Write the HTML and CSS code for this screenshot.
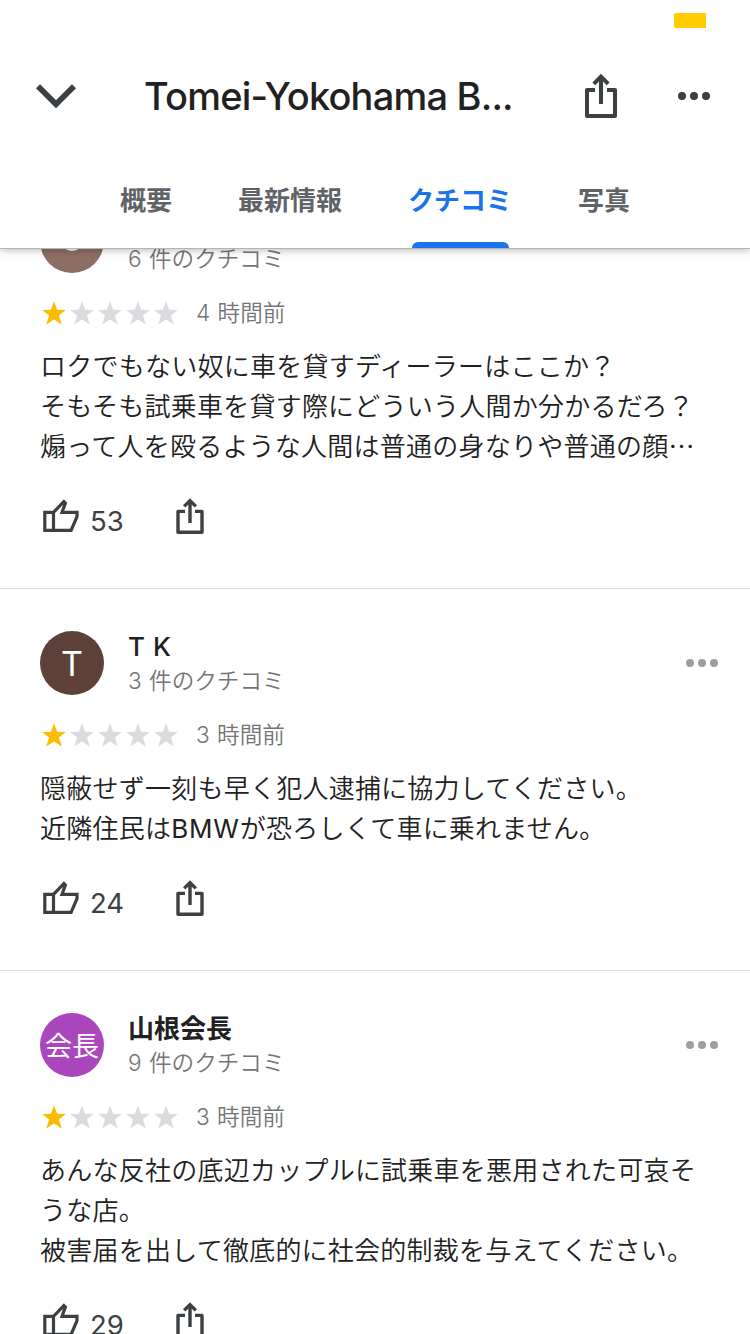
FILE: index.html
```html
<!DOCTYPE html>
<html lang="ja">
<head>
<meta charset="utf-8">
<title>Tomei-Yokohama B…</title>
<link rel="stylesheet" href="styles.css">
</head>
<body>
<svg class="defs" aria-hidden="true">
  <symbol id="star" viewBox="0 0 24 24"><path d="M12 0.3l3.1 8.4 8.7.3-6.9 5.5 2.9 9L12 18.4l-7.8 5.1 2.9-9L.2 9l8.7-.3z"/></symbol>
  <symbol id="dots" viewBox="0 0 32 8"><circle cx="4" cy="4" r="4"/><circle cx="16" cy="4" r="4"/><circle cx="28" cy="4" r="4"/></symbol>
  <symbol id="thumb" viewBox="0 0 36 34"><path fill="none" stroke-width="3.2" d="M10.5 31.4H1.8V13.3h8.7M10.5 31.4V13.3L20.9 2.6l1.5 1.5-3.4 9.2h15v4.3l-5.9 13.8H10.5z"/></symbol>
  <symbol id="share" viewBox="0 0 28 36"><path fill="none" stroke-width="3.4" stroke-linejoin="round" d="M9 13.4H2v20.8h24V13.4h-7"/><path fill="none" stroke-width="3.4" d="M14 25V3M8.2 8.4L14 2.6l5.8 5.8"/></symbol>
</svg>
<div class="screen">
  <header class="header">
    <div class="status"><span class="battery"></span></div>
    <div class="bar">
      <svg class="chevron" viewBox="0 0 40 24"><path d="M2 2.2L20 20.2l18-18"/></svg>
      <h1 class="title">Tomei-Yokohama B...</h1>
      <svg class="share-big" viewBox="0 0 32 44"><path stroke-linejoin="round" d="M10 16H2v26h28V16h-8"/><path d="M16 30V3M8.8 9.8L16 2.6l7.2 7.2"/></svg>
      <svg class="more-big"><use href="#dots"/></svg>
    </div>
    <nav class="tabs">
      <span class="tab">概要</span>
      <span class="tab">最新情報</span>
      <span class="tab active">クチコミ</span>
      <span class="tab">写真</span>
    </nav>
  </header>
  <main class="reviews">
    <article class="review">
      <div class="head">
        <div class="avatar tan">S</div>
        <div class="who"><div class="name">&nbsp;</div><div class="count">6 件のクチコミ</div></div>
        <svg class="more"><use href="#dots"/></svg>
      </div>
      <div class="rating">
        <div class="stars"><svg class="on"><use href="#star"/></svg><svg><use href="#star"/></svg><svg><use href="#star"/></svg><svg><use href="#star"/></svg><svg><use href="#star"/></svg></div>
        <span class="time">4 時間前</span>
      </div>
      <p class="text">ロクでもない奴に車を貸すディーラーはここか？<br>そもそも試乗車を貸す際にどういう人間か分かるだろ？<br>煽って人を殴るような人間は普通の身なりや普通の顔<span class="dots">…</span></p>
      <div class="actions"><svg class="thumb"><use href="#thumb"/></svg><span class="likes">53</span><svg class="share"><use href="#share"/></svg></div>
    </article>
    <article class="review">
      <div class="head">
        <div class="avatar brown">T</div>
        <div class="who"><div class="name latin">T K</div><div class="count">3 件のクチコミ</div></div>
        <svg class="more"><use href="#dots"/></svg>
      </div>
      <div class="rating">
        <div class="stars"><svg class="on"><use href="#star"/></svg><svg><use href="#star"/></svg><svg><use href="#star"/></svg><svg><use href="#star"/></svg><svg><use href="#star"/></svg></div>
        <span class="time">3 時間前</span>
      </div>
      <p class="text">隠蔽せず一刻も早く犯人逮捕に協力してください。<br>近隣住民は<span class="brand">BMW</span>が恐ろしくて車に乗れません。</p>
      <div class="actions"><svg class="thumb"><use href="#thumb"/></svg><span class="likes">24</span><svg class="share"><use href="#share"/></svg></div>
    </article>
    <article class="review">
      <div class="head">
        <div class="avatar purple">会長</div>
        <div class="who"><div class="name cjk">山根会長</div><div class="count">9 件のクチコミ</div></div>
        <svg class="more"><use href="#dots"/></svg>
      </div>
      <div class="rating">
        <div class="stars"><svg class="on"><use href="#star"/></svg><svg><use href="#star"/></svg><svg><use href="#star"/></svg><svg><use href="#star"/></svg><svg><use href="#star"/></svg></div>
        <span class="time">3 時間前</span>
      </div>
      <p class="text">あんな反社の底辺カップルに試乗車を悪用された可哀そ<br>うな店。<br>被害届を出して徹底的に社会的制裁を与えてください。</p>
      <div class="actions"><svg class="thumb"><use href="#thumb"/></svg><span class="likes">29</span><svg class="share"><use href="#share"/></svg></div>
    </article>
  </main>
</div>
</body>
</html>
```

FILE: styles.css
```css
* { box-sizing: border-box; }
body {
  margin: 0;
  background: #fff;
  color: #212121;
  font-family: Inter, "Noto Sans CJK JP", sans-serif;
}
.defs { display: none; }
svg { display: block; flex: none; }
.screen { width: 750px; height: 1334px; overflow: hidden; }

.header {
  position: relative;
  z-index: 1;
  height: 248px;
  background: #fff;
  box-shadow: 0 1px 0 #b4b4b4, 0 2px 8px rgba(0, 0, 0, .28);
}
.status { display: flex; justify-content: flex-end; height: 40px; padding: 13px 44px 0 0; }
.battery { width: 32px; height: 15px; background: #fc0; border-radius: 2px 0 0 2px; }
.bar { display: flex; align-items: center; height: 112px; padding: 0 40px 0 36px; }
.chevron { width: 40px; height: 24px; fill: none; stroke: #3c4043; stroke-width: 5.8; }
.title {
  width: 440px;
  margin: 0;
  padding-left: 68px;
  font-size: 38px;
  font-weight: 500;
  line-height: 48px;
  letter-spacing: -.8px;
  white-space: nowrap;
}
.share-big { width: 32px; height: 44px; margin-left: 69px; fill: none; stroke: #3c4043; stroke-width: 4; overflow: visible; }
.more-big { width: 32px; height: 8px; margin-left: auto; fill: #3c4043; }

.tabs { display: flex; gap: 66px; height: 96px; padding-left: 120px; }
.tab {
  display: flex;
  flex-direction: column;
  justify-content: space-between;
  height: 96px;
  padding-top: 28px;
  color: #5f6368;
  font-family: "Noto Sans CJK JP", sans-serif;
  font-size: 26px;
  font-weight: 700;
  line-height: 38px;
}
.active { color: #1a73e8; }
.active::after { content: ""; height: 6px; margin: 0 3px 0 4px; background: #1a73e8; border-radius: 6px 6px 0 0; }

.reviews { margin-top: -81px; }
.review { padding: 42px 32px 48px 40px; border-bottom: 1px solid #dadada; }
.head { display: flex; align-items: center; height: 64px; }
.avatar {
  display: flex;
  align-items: center;
  justify-content: center;
  width: 64px;
  height: 64px;
  border-radius: 50%;
  color: #fff;
  font-size: 34px;
}
.tan { padding-bottom: 8px; background: #8d6e63; }
.brown { background: #5d4037; }
.purple { padding-bottom: 2px; background: #ab47bc; font-size: 27px; }
.who { margin-left: 24px; }
.name { height: 33px; font-size: 26px; font-weight: 500; line-height: 33px; }
.latin { letter-spacing: .5px; }
.cjk { font-weight: 700; }
.count, .time { color: #757575; font-size: 22.6px; font-weight: 350; line-height: 34px; word-spacing: 1px; white-space: nowrap; }
.count { padding-top: 1px; height: 34px; }
.more { width: 32px; height: 8px; margin-left: auto; fill: #9e9e9e; }

.rating { display: flex; align-items: center; height: 40px; margin-top: 20px; }
.stars { display: flex; gap: 4px; padding-left: 2px; fill: #dadce0; }
.stars svg { width: 24px; height: 24px; }
.stars .on { fill: #fbbc04; }
.time { margin-left: 18px; }

.text { margin: 14px 0 0; font-size: 26px; font-weight: 350; line-height: 40px; letter-spacing: .24px; white-space: nowrap; }
.dots { font-family: "Noto Sans CJK JP", sans-serif; line-height: 1; }
.brand { font-weight: 400; letter-spacing: .8px; }
.actions { display: flex; align-items: center; height: 40px; margin-top: 29px; margin-bottom: 4px; fill: none; stroke: #3c4043; }
.thumb { width: 36px; height: 34px; margin-left: 3px; }
.likes { width: 97px; padding: 10px 0 0 11px; color: #3c4043; font-size: 27.5px; line-height: 28px; }
.share { width: 28px; height: 36px; }
```
